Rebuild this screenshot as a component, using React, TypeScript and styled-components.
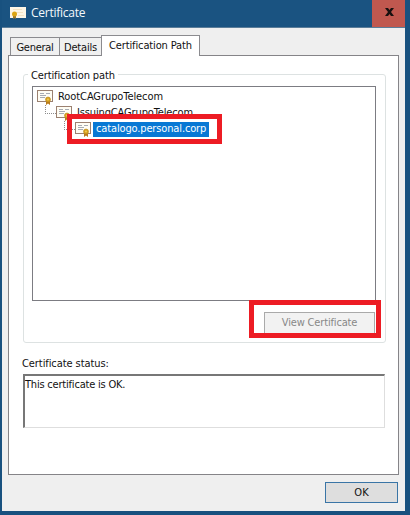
import React from 'react';
import styled, { createGlobalStyle } from 'styled-components';

const GlobalStyle = createGlobalStyle`
  * { box-sizing: border-box; }
  body {
    margin: 0;
    overflow: hidden;
    background: #18517f;
  }
`;

/* ── window chrome ── */

const Desktop = styled.div`
  width: 410px;
  height: 515px;
  padding: 0 5px 4px 2px;
  background: #18517f;
  font-family: 'DejaVu Sans Condensed', 'DejaVu Sans', sans-serif;
  font-stretch: condensed;
  font-size: 11px;
  line-height: 14px;
  color: #111;
  white-space: nowrap;
`;

const Dialog = styled.div`
  position: relative;
  display: flex;
  flex-direction: column;
  height: 511px;
  background: #efefef;
`;

const TitleBar = styled.div`
  display: flex;
  align-items: center;
  height: 28px;
  padding-left: 8px;
  background: #1a5381;
  border-bottom: 1px solid #5b7d99;
`;

const Title = styled.div`
  flex: 1;
  margin: -2px 0 0 4px;
  font-family: 'Open Sans', 'Noto Sans', sans-serif;
  font-stretch: normal;
  font-size: 12px;
  color: #f4f8fb;
`;

const CloseButton = styled.button`
  display: flex;
  align-items: center;
  justify-content: center;
  width: 33px;
  height: 27px;
  padding: 0 0 3px 1px;
  border: 0;
  background: #c0584f;
`;

const Text = styled.span<{ $spacing?: number }>`
  letter-spacing: ${(p) => p.$spacing ?? 0}px;
`;

/* ── tabs ── */

const TabRow = styled.div`
  display: flex;
  align-items: flex-end;
  height: 27px;
  padding-left: 8px;
`;

const Tab = styled.div<{ $width: number; $active?: boolean }>`
  width: ${(p) => p.$width}px;
  height: ${(p) => (p.$active ? 21 : 18)}px;
  padding-top: 3px;
  margin-bottom: ${(p) => (p.$active ? -1 : 0)}px;
  z-index: ${(p) => (p.$active ? 1 : 0)};
  text-align: center;
  background: ${(p) => (p.$active ? '#fff' : '#f0f0f0')};
  border: 1px solid #8b8b8f;
  border-bottom: 0;
  & + & { margin-left: -1px; }
`;

const TabPanel = styled.div`
  width: 391px;
  height: 420px;
  margin-left: 6px;
  padding: 18px 12px 0 14px;
  background: #fff;
  border: 1px solid #858488;
`;

/* ── certification path ── */

const Group = styled.div`
  position: relative;
  height: 269px;
  padding: 11px 9px 0 8px;
  border: 1px solid #dde2e2;
  border-radius: 3px;
`;

const Legend = styled.div`
  position: absolute;
  top: -6px;
  left: 4px;
  padding: 0 3px;
  line-height: 13px;
  background: #fff;
`;

const Tree = styled.div`
  height: 215px;
  padding: 2px 0 0 4px;
  border: 1px solid #7c7c82;
`;

const TreeRow = styled.div`
  display: flex;
  align-items: center;
  height: 16px;
`;

const Branch = styled.svg`
  flex: none;
  width: 19px;
  height: 16px;
`;

const NodeLabel = styled.span<{ $selected?: boolean; $spacing?: number }>`
  height: 15px;
  margin-left: 1px;
  padding: 0 3px;
  letter-spacing: ${(p) => p.$spacing ?? 0}px;
  color: ${(p) => (p.$selected ? '#fff' : '#111')};
  background: ${(p) => (p.$selected ? '#0878d4' : 'transparent')};
`;

const ButtonRow = styled.div`
  display: flex;
  justify-content: flex-end;
  padding: 11px 1px 0 0;
`;

const Button = styled.button<{ $primary?: boolean }>`
  width: ${(p) => (p.$primary ? 73 : 111)}px;
  height: ${(p) => (p.$primary ? 21 : 22)}px;
  padding: 0;
  font: inherit;
  color: ${(p) => (p.$primary ? '#111' : '#888')};
  background: ${(p) => (p.$primary ? '#dedede' : '#f2f2f2')};
  border: 1px solid ${(p) => (p.$primary ? '#3a75a6' : '#aaa')};
`;

/* ── status ── */

const StatusLabel = styled.div`
  margin: 14px 0 3px -1px;
`;

const StatusBox = styled.div`
  width: 362px;
  height: 54px;
  padding: 2px 0 0;
  border: 1px solid #dedede;
  border-top: 2px solid #777;
  border-left: 2px solid #777;
`;

const Footer = styled.div`
  display: flex;
  justify-content: flex-end;
  padding: 7px 7px 0 0;
`;

const Highlight = styled.div<{ $x: number; $y: number; $w: number; $h: number }>`
  position: absolute;
  left: ${(p) => p.$x}px;
  top: ${(p) => p.$y}px;
  width: ${(p) => p.$w}px;
  height: ${(p) => p.$h}px;
  border: 5px solid #ed1c24;
  z-index: 2;
`;

const Icon = styled.svg`
  flex: none;
  width: 17px;
  height: 15px;
`;

function CertIcon() {
  return (
    <Icon viewBox="0 0 17 15">
      <rect x=".5" y=".5" width="15" height="11" fill="#fffdf4" stroke="#9b8171" />
      <path d="M3 3.5h4M9 3.5h4M3 5.5h6M3 7.5h5" stroke="#a7acb4" />
      <path d="M9 10v5l2-1.5 2 1.5v-5z" fill="#b97b1b" />
      <circle cx="11" cy="9.5" r="2.5" fill="#d9a21b" stroke="#b88922" strokeWidth=".6" />
      <circle cx="11" cy="9.5" r="1" fill="#f0ca55" />
    </Icon>
  );
}

function TitleIcon() {
  return (
    <Icon viewBox="0 0 17 15">
      <path d="M0 1h16v11H0z" fill="#fdf6e6" />
      <path d="M3 3.5h9M6 6.5h7M8 9.5h6" stroke="#f3e3c4" />
      <path d="M3 9v4l1.5-1L6 13V9z" fill="#9c7a2e" />
      <circle cx="4.5" cy="8" r="2.5" fill="#dba514" />
    </Icon>
  );
}

function Connector({ empty = false }: { empty?: boolean }) {
  return (
    <Branch>
      {!empty && <path d="M8.5 0v8M8 8.5h11" fill="none" stroke="#8c8c8c" strokeDasharray="1 1" />}
    </Branch>
  );
}

export default function App() {
  return (
    <Desktop>
      <GlobalStyle />
      <Dialog>
        <TitleBar>
          <TitleIcon />
          <Title><Text $spacing={-0.25}>Certificate</Text></Title>
          <CloseButton aria-label="Close">
            <svg width="9" height="8" viewBox="0 0 9 8">
              <path d="M0 0h3l1.5 2L6 0h3L6 4l3 4H6L4.5 6 3 8H0l3-4z" fill="#17100f" />
            </svg>
          </CloseButton>
        </TitleBar>

        <TabRow>
          <Tab $width={50}><Text $spacing={-0.28}>General</Text></Tab>
          <Tab $width={43}><Text $spacing={-0.2}>Details</Text></Tab>
          <Tab $width={99} $active><Text $spacing={-0.13}>Certification Path</Text></Tab>
        </TabRow>

        <TabPanel>
          <Group>
            <Legend><Text $spacing={-0.12}>Certification path</Text></Legend>
            <Tree>
              <TreeRow>
                <CertIcon />
                <NodeLabel $spacing={-0.08}>RootCAGrupoTelecom</NodeLabel>
              </TreeRow>
              <TreeRow>
                <Connector />
                <CertIcon />
                <NodeLabel $spacing={-0.14}>IssuingCAGrupoTelecom</NodeLabel>
              </TreeRow>
              <TreeRow>
                <Connector empty />
                <Connector />
                <CertIcon />
                <NodeLabel $selected $spacing={-0.14}>catalogo.personal.corp</NodeLabel>
              </TreeRow>
            </Tree>
            <ButtonRow>
              <Button disabled><Text $spacing={-0.16}>View Certificate</Text></Button>
            </ButtonRow>
          </Group>

          <StatusLabel><Text $spacing={-0.08}>Certificate status:</Text></StatusLabel>
          <StatusBox><Text $spacing={-0.2}>This certificate is OK.</Text></StatusBox>
        </TabPanel>

        <Footer>
          <Button $primary><Text>OK</Text></Button>
        </Footer>

        <Highlight $x={65} $y={114} $w={155} $h={30} />
        <Highlight $x={247} $y={300} $w={132} $h={38} />
      </Dialog>
    </Desktop>
  );
}
